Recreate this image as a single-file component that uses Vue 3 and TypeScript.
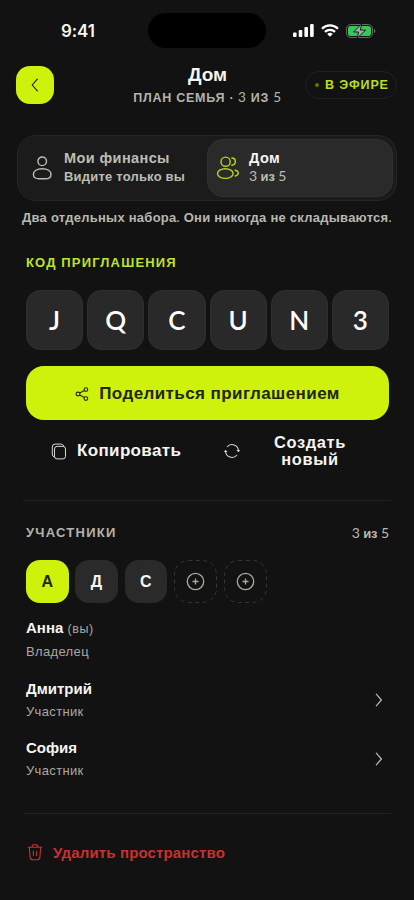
<script setup lang="ts">
const code: string[] = ['J', 'Q', 'C', 'U', 'N', '3']

interface Member {
  name: string
  role: string
  self: boolean
}

const members: Member[] = [
  { name: 'Анна', role: 'Владелец', self: true },
  { name: 'Дмитрий', role: 'Участник', self: false },
  { name: 'София', role: 'Участник', self: false },
]
const freeSlots = 2
</script>

<template>
  <main class="screen">
    <div class="status">
      <span class="clock">9:41</span>
      <div class="island"></div>
      <div class="indicators">
        <svg class="signal" viewBox="0 0 21 13" width="21" height="13" fill="#fff">
          <rect x="0" y="8.5" width="3.6" height="4.5" rx="1" />
          <rect x="5.7" y="6" width="3.6" height="7" rx="1" />
          <rect x="11.4" y="3" width="3.6" height="10" rx="1" />
          <rect x="17.1" y="0" width="3.6" height="13" rx="1" />
        </svg>
        <svg class="wifi" viewBox="0 0 18 13" width="18" height="13" fill="none" stroke="#fff" stroke-width="2.3">
          <path d="M1 4.7a11.4 11.4 0 0 1 16 0" />
          <path d="M4 7.9a7.1 7.1 0 0 1 10 0" />
          <path d="M9 12.8 6.2 10a4 4 0 0 1 5.6 0Z" fill="#fff" stroke="none" />
        </svg>
        <svg class="battery" viewBox="0 0 30 14" width="30" height="14">
          <rect x=".5" y=".5" width="26" height="13" rx="4.2" fill="none" stroke="#686868" />
          <rect x="2" y="2" width="23" height="10" rx="2.8" fill="#34c759" />
          <path d="M28 4.8v4.4c1.7-.7 1.7-3.7 0-4.4Z" fill="#777" />
          <path d="M15.6-.2 7.6 8h5l-1.4 6.2 8.4-8.1h-5.2Z" fill="#a5aaa6" stroke="#121212" stroke-width=".9" />
        </svg>
      </div>
    </div>

    <header class="header">
      <button class="back" aria-label="Назад">
        <svg viewBox="0 0 8 14" width="8" height="14" fill="none" stroke="#151800" stroke-width="1.1" stroke-linecap="round" stroke-linejoin="round"><path d="M6.3 1.2 1.2 7l5.1 5.8" /></svg>
      </button>
      <div class="heading">
        <h1>Дом</h1>
        <p>ПЛАН СЕМЬЯ <span class="num">· 3</span> ИЗ <span class="num">5</span></p>
      </div>
      <div class="live"><i></i><span>В ЭФИРЕ</span></div>
    </header>

    <nav class="spaces">
      <div class="space">
        <svg viewBox="0 0 20 24" width="20" height="24" fill="none" stroke="#bdbdb3" stroke-width="1.4"><circle cx="10.2" cy="5.3" r="4.3" /><path d="M10.2 12.7c5.2 0 8.8 2.3 8.8 5.7 0 3.2-2.4 4.4-5.6 4.4H7c-3.2 0-5.6-1.2-5.6-4.4 0-3.4 3.6-5.7 8.8-5.7Z" /></svg>
        <div class="space-text"><b>Мои финансы</b><small>Видите только вы</small></div>
      </div>
      <div class="space active">
        <svg viewBox="0 0 24 24" width="24" height="24" fill="none" stroke="#b6d916" stroke-width="1.4" stroke-linecap="round"><circle cx="9.6" cy="5.7" r="4.6" /><ellipse cx="9.3" cy="17.6" rx="7.8" ry="4.8" /><path d="M15.8 2c4.7.1 4.7 7.1 0 7.3M19.1 14.2c4.2.9 4.2 4.9.2 5.8" /></svg>
        <div class="space-text"><b>Дом</b><small><span class="num">3</span> из <span class="num">5</span></small></div>
      </div>
    </nav>
    <p class="note">Два отдельных набора<span class="num">.</span> Они никогда не складываются<span class="num">.</span></p>

    <section class="invite">
      <h2>КОД ПРИГЛАШЕНИЯ</h2>
      <div class="code"><span v-for="char in code" :key="char">{{ char }}</span></div>
      <button class="share">
        <svg viewBox="0 0 14 14" width="14" height="14" fill="none" stroke="#262b05" stroke-width="1.15"><circle cx="3" cy="7" r="1.9" /><circle cx="10.9" cy="2.5" r="1.8" /><circle cx="10.9" cy="11.5" r="1.8" /><path d="m4.7 6 4.6-2.6M4.7 8l4.6 2.6" /></svg>
        <span>Поделиться приглашением</span>
      </button>
      <div class="actions">
        <button class="copy">
          <svg viewBox="0 0 16 17" width="16" height="17" fill="none" stroke="#d9d9d9" stroke-width="1"><rect x="3.5" y="3.4" width="11" height="12.5" rx="2.6" /><path d="M3.6 14.1A3 3 0 0 1 1.3 11V4A2.8 2.8 0 0 1 4.1 1.1h5.8a3 3 0 0 1 2.9 2.2" /></svg>
          <span>Копировать</span>
        </button>
        <button class="renew">
          <svg viewBox="0 0 16 16" width="16" height="16" fill="none" stroke="#d9d9d9" stroke-width="1.1"><path d="M3 4A6.4 6.4 0 0 1 14.4 8M13 12A6.4 6.4 0 0 1 1.6 8" /><path d="M-.2 8.9 1.6 6.7l1.9 2.2ZM12.5 7.1l1.9 2.2 1.8-2.2Z" fill="#d9d9d9" stroke="none" /></svg>
          <span>Создать<br>новый</span>
        </button>
      </div>
    </section>

    <section class="members">
      <div class="members-head"><h2>УЧАСТНИКИ</h2><span><span class="num">3</span> из <span class="num">5</span></span></div>
      <div class="avatars">
        <span v-for="m in members" :key="m.name" class="avatar" :class="{ own: m.self }">{{ m.name[0] }}</span>
        <span v-for="slot in freeSlots" :key="slot" class="slot">
          <svg viewBox="0 0 43 43" width="43" height="43" fill="none"><rect x=".5" y=".5" width="42" height="42" rx="14" stroke="#353535" stroke-dasharray="4 3.5" /><circle cx="21.5" cy="21.5" r="8.2" stroke="#aaa9a2" stroke-width="1.3" /><path d="M21.5 18.5v6M18.5 21.5h6" stroke="#aaa9a2" stroke-width="1.3" /></svg>
        </span>
      </div>
      <div class="list">
        <div v-for="m in members" :key="m.name" class="member">
          <div><p class="name">{{ m.name }} <small v-if="m.self">(вы)</small></p><p class="role">{{ m.role }}</p></div>
          <svg v-if="!m.self" viewBox="0 0 8 14" width="8" height="14" fill="none" stroke="#b9b9b3" stroke-width="1.2" stroke-linecap="round" stroke-linejoin="round"><path d="M1.3 1.2 6.4 7l-5.1 5.8" /></svg>
        </div>
      </div>
    </section>

    <button class="delete">
      <svg viewBox="0 0 16 18" width="16" height="18" fill="none" stroke="#c9302f" stroke-width="1.1" stroke-linecap="round"><path d="M1.2 4.2h13.6M5 4C5 .6 11 .6 11 4M2.3 4.5l.8 9.6c.2 1.8 1 2.6 2.6 2.6h4.6c1.6 0 2.4-.8 2.6-2.6l.8-9.6M6.3 8.3l.2 4.2M9.7 8.3l-.2 4.2" /></svg>
      <span>Удалить пространство</span>
    </button>
  </main>
</template>

<style>
body { background: #121212; }
</style>

<style scoped>
* { box-sizing: border-box; }
h1, h2, p { margin: 0; }
button { padding: 0; border: 0; background: none; color: inherit; font: inherit; letter-spacing: inherit; }
svg { display: block; flex: none; }
.screen { width: 414px; height: 900px; overflow: hidden; background: #121212; color: #f5f5f3; font-family: "Liberation Sans", Arial, sans-serif; font-weight: 700; }
.num { font-family: Lato, sans-serif; font-weight: 400; }
.status { display: grid; grid-template-columns: 148px 118px 1fr; height: 61px; padding-top: 13px; }
.clock { padding: 8px 0 0 61px; font: 600 17px/20px Inter, sans-serif; letter-spacing: -.1px; }
.island { height: 35px; border-radius: 18px; background: #000; }
.indicators { display: flex; padding: 11px 0 0 27px; gap: 7px; }
.header { display: grid; grid-template-columns: 98px 1fr 98px; height: 74px; padding: 5px 17px 0 16px; }
.back { display: grid; place-items: center; width: 38px; height: 38px; border-radius: 14px; background: #cef20c; }
.heading { padding-left: 2px; text-align: center; white-space: nowrap; }
h1 { font-size: 19px; line-height: 20px; margin-top: -1px; }
.heading p { margin-top: 6px; color: #b4b4ab; font-size: 12.5px; line-height: 14px; letter-spacing: .75px; }
.heading .num { font-size: 13.5px; line-height: 1; }
.live { display: flex; align-items: center; gap: 6px; justify-self: end; width: 92px; height: 28px; margin-top: 5px; padding: 0 0 1px 9px; border: 1px solid #212121; border-radius: 14px; color: #bbdd21; font-size: 12.5px; letter-spacing: .9px; white-space: nowrap; }
.live i { width: 4px; height: 4px; border-radius: 50%; background: #617111; }
.spaces { display: grid; grid-template-columns: 186px 186px; height: 66px; margin: 0 17px; padding: 3px; border: 1px solid #252525; border-radius: 19px; background: #1b1b1b; color: #bdbdb3; }
.space { display: flex; align-items: center; gap: 12px; padding-left: 11px; border-radius: 16px; }
.active { gap: 9px; padding-left: 8px; background: #2a2a2a; border: 1px solid #313131; }
.active b { color: #f5f5f3; }
.space-text { display: flex; flex-direction: column; gap: 3px; margin-top: -2px; white-space: nowrap; }
.space-text b { font-size: 14.5px; line-height: 16px; letter-spacing: .4px; }
.space-text small { height: 15px; font-size: 13px; line-height: 15px; letter-spacing: .2px; }
.active .space-text small { letter-spacing: -.1px; }
.active .num, .members-head .num { font-size: 14px; line-height: 1; }
.note { height: 16px; margin: 9px 0 0 22px; color: #b8b8af; font-size: 13px; line-height: 15px; letter-spacing: .25px; white-space: nowrap; }
.note .num { line-height: 1; }
.invite { height: 275px; margin: 0 23px; padding: 29px 2px 0 3px; border-bottom: 1px solid #222; }
h2 { font-size: 13px; line-height: 16px; letter-spacing: 1.15px; color: #bfe32b; }
.code { display: grid; grid-template-columns: repeat(6, 1fr); gap: 4px; margin: 19px 0 16px; }
.code span { display: grid; place-items: center; height: 60px; border: 1px solid #2f2f2f; border-radius: 14px; background: #292929; color: #fff; font: 600 26px/30px Lato, sans-serif; }
.share { display: flex; align-items: center; justify-content: center; gap: 10px; width: 363px; height: 54px; padding-top: 2px; border-radius: 18px; background: #cef20c; color: #202604; font-size: 17px; letter-spacing: .42px; white-space: nowrap; }
.actions { display: grid; grid-template-columns: 181px 182px; height: 62px; font-size: 17px; line-height: 17px; letter-spacing: .35px; }
.actions button { display: flex; align-items: center; }
.copy { padding-left: 25px; gap: 10px; }
.copy span { padding-bottom: 2px; }
.renew { padding-left: 17px; gap: 34px; font-size: 16.4px; line-height: 17.5px; letter-spacing: .65px; }
.members { height: 313px; margin: 0 23px; padding: 24px 2px 0 3px; border-bottom: 1px solid #222; }
.members-head { display: flex; justify-content: space-between; align-items: center; height: 16px; color: #b8b8af; font-size: 13px; letter-spacing: -.1px; }
.members-head h2 { color: #b4b4ab; letter-spacing: 1.25px; }
.avatars { display: flex; gap: 6.8px; margin-top: 19px; }
.avatar { display: grid; place-items: center; width: 42.5px; height: 43px; border-radius: 14px; background: #2a2a2a; font-size: 16px; }
.own { background: #cef20c; color: #202604; }
.list { margin-top: 7px; }
.member { display: flex; align-items: center; justify-content: space-between; height: 59.7px; padding-right: 6px; }
.name { font-size: 15px; line-height: 18px; }
.name small { color: #aaa9a2; font-size: 12.5px; font-weight: 400; letter-spacing: .6px; }
.role { margin-top: 6px; color: #aaa9a2; font-size: 13px; font-weight: 400; line-height: 16px; letter-spacing: .35px; }
.delete { display: flex; align-items: center; gap: 10px; height: 76px; margin-left: 27px; color: #c9302f; font-size: 15px; letter-spacing: .15px; }
</style>
